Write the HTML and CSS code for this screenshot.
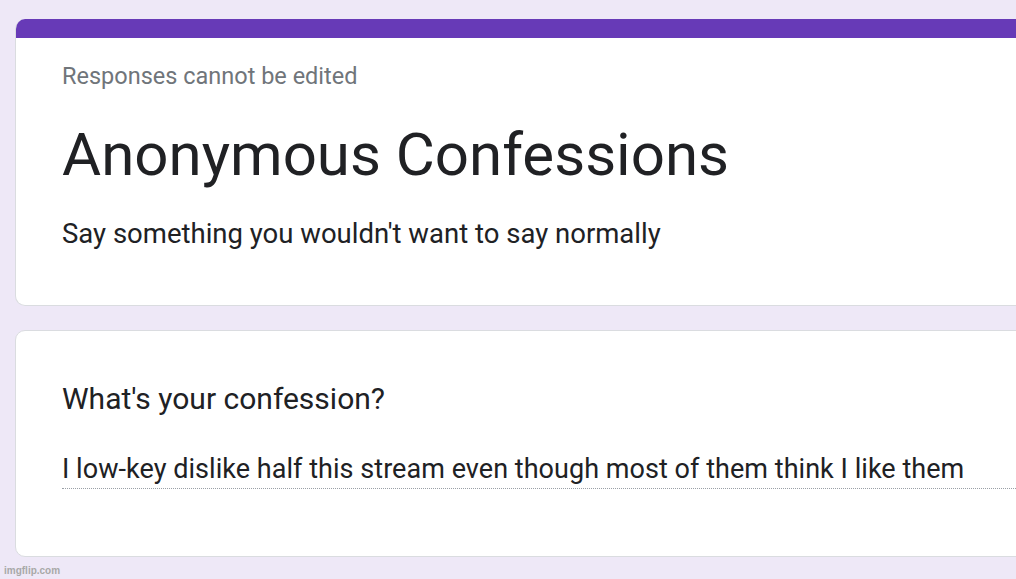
FILE: index.html
```html
<!DOCTYPE html>
<html>
<head>
<meta charset="utf-8">
<link rel="stylesheet" href="styles.css">
</head>
<body>
<div class="page">
  <div class="card header-card">
    <div class="accent"></div>
    <div class="header-body">
      <div class="note">Responses cannot be edited</div>
      <h1 class="title">Anonymous Confessions</h1>
      <div class="desc">Say something you wouldn't want to say normally</div>
    </div>
  </div>
  <div class="card question-card">
    <div class="question">What's your confession?</div>
    <div class="answer">I low-key dislike half this stream even though most of them think I like them</div>
  </div>
  <div class="watermark">imgflip.com</div>
</div>
</body>
</html>
```
FILE: styles.css
```css
html, body {
  margin: 0;
  padding: 0;
  background: #eee8f7;
  overflow: hidden;
  width: 1016px;
  height: 579px;
}
.page {
  padding: 19px 0 0 15px;
  display: flex;
  flex-direction: column;
  gap: 24px;
  font-family: Roboto, "Liberation Sans", sans-serif;
  color: #202124;
}
.card {
  width: 1100px;
  background: #fff;
  border: 1px solid #dadce0;
  border-radius: 10px;
  box-sizing: border-box;
}
.header-card {
  height: 287px;
  overflow: hidden;
  border-top: none;
}
.accent {
  height: 19px;
  background: #673ab7;
}
.header-body {
  padding: 22px 0 0 46px;
}
.note {
  font-size: 23.5px;
  color: #70757a;
  line-height: 32px;
}
.title {
  margin: 28px 0 0;
  font-weight: 400;
  font-size: 60px;
  line-height: 70px;
}
.desc {
  margin-top: 28px;
  font-size: 27.5px;
  line-height: 32px;
}
.question-card {
  height: 227px;
  padding: 50px 0 0 46px;
}
.question {
  font-size: 30px;
  line-height: 36px;
}
.answer {
  margin-top: 36px;
  width: 954px;
  font-size: 27px;
  letter-spacing: 0.04px;
  line-height: 32px;
  padding-bottom: 3px;
  border-bottom: 1px dotted #9aa0a6;
}
.watermark {
  margin-top: -16px;
  margin-left: -11px;
  font-family: "Liberation Sans", Arial, sans-serif;
  font-weight: bold;
  font-size: 10px;
  color: #a8a8a8;
}
```
